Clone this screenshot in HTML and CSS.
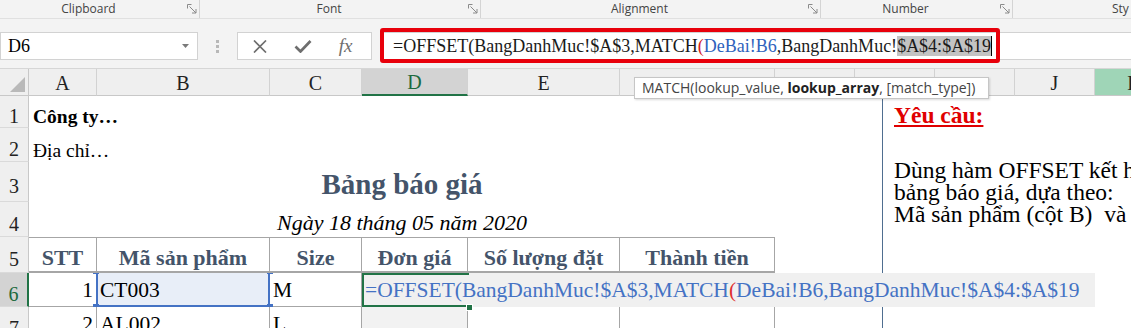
FILE: index.html
```html
<!DOCTYPE html>
<html lang="vi">
  <head>
    <meta charset="UTF-8" />
    <title>Bảng báo giá - Excel</title>
    <link rel="stylesheet" href="styles.css">
  </head>
  <body>
    <!-- Ribbon group labels -->
    <div class="ribbon">
      <div class="group g-clip">
        <span class="glabel">Clipboard</span>
        <span class="launch"><svg width="10" height="10" viewBox="0 0 10 10"><path d="M0.5 4.5V0.5H4.5M2.5 2.5L9 9M9 5V9H5" stroke="#8a8a8a" fill="none"/></svg></span>
      </div>
      <div class="group g-font">
        <span class="glabel">Font</span>
        <span class="launch"><svg width="10" height="10" viewBox="0 0 10 10"><path d="M0.5 4.5V0.5H4.5M2.5 2.5L9 9M9 5V9H5" stroke="#8a8a8a" fill="none"/></svg></span>
      </div>
      <div class="group g-align">
        <span class="glabel">Alignment</span>
        <span class="launch"><svg width="10" height="10" viewBox="0 0 10 10"><path d="M0.5 4.5V0.5H4.5M2.5 2.5L9 9M9 5V9H5" stroke="#8a8a8a" fill="none"/></svg></span>
      </div>
      <div class="group g-num">
        <span class="glabel">Number</span>
        <span class="launch"><svg width="10" height="10" viewBox="0 0 10 10"><path d="M0.5 4.5V0.5H4.5M2.5 2.5L9 9M9 5V9H5" stroke="#8a8a8a" fill="none"/></svg></span>
      </div>
      <div class="group g-sty">Sty</div>
    </div>

    <!-- Formula bar -->
    <div class="fbar">
      <div class="namebox">
        <span>D6</span>
        <svg width="7" height="4" viewBox="0 0 7 4"><path d="M0 0H7L3.5 4Z" fill="#7a7a7a"/></svg>
      </div>
      <div class="grip"><i></i><i></i><i></i></div>
      <div class="fxbtns">
        <span class="fbtn"><svg width="14" height="13" viewBox="0 0 14 13"><path d="M1 0.5L13 12.5M13 0.5L1 12.5" stroke="#6e6e6e" stroke-width="1.7" fill="none"/></svg></span>
        <span class="fbtn"><svg width="18" height="13" viewBox="0 0 18 13"><path d="M1.5 6.5L6.5 11.5L16.5 1" stroke="#6e6e6e" stroke-width="2.7" fill="none"/></svg></span>
        <span class="fbtn fx">fx</span>
      </div>
      <div class="finput">
        <span>=OFFSET(BangDanhMuc!$A$3,MATCH</span><span class="paren">(</span><span class="ref">DeBai!B6</span><span>,BangDanhMuc!</span><span class="hl">$A$4:$A$19</span><span class="caret"></span>
        <div class="annot"></div>
      </div>
    </div>

    <!-- Sheet -->
    <div class="sheet">
      <div class="row hdr">
        <div class="corner"><svg width="29" height="27" viewBox="0 0 29 27"><path d="M25 8V23H10Z" fill="#b9b9b9"/></svg></div>
        <div class="ch w-a">A</div>
        <div class="ch w-b">B</div>
        <div class="ch w-c">C</div>
        <div class="ch w-d on">D</div>
        <div class="ch w-e">E</div>
        <div class="ch w-f"></div>
        <div class="ch w-g"></div>
        <div class="ch w-g"></div>
        <div class="ch w-g"></div>
        <div class="ch w-g">J</div>
        <div class="ch w-g col-k">K</div>
      </div>

      <div class="row r1">
        <div class="rh">1</div>
        <div class="cell wide bold">Công ty…</div>
      </div>
      <div class="row r2">
        <div class="rh">2</div>
        <div class="cell wide">Địa chỉ…</div>
      </div>
      <div class="row r3">
        <div class="rh">3</div>
        <div class="cell w-af title">Bảng báo giá</div>
      </div>
      <div class="row r4">
        <div class="rh">4</div>
        <div class="cell w-af subtitle">Ngày 18 tháng 05 năm 2020</div>
      </div>
      <div class="row r5">
        <div class="rh">5</div>
        <div class="cell tb w-a">STT</div>
        <div class="cell tb w-b">Mã sản phẩm</div>
        <div class="cell tb w-c">Size</div>
        <div class="cell tb w-d">Đơn giá</div>
        <div class="cell tb w-e">Số lượng đặt</div>
        <div class="cell tb w-f">Thành tiền</div>
      </div>
      <div class="row r6">
        <div class="rh on">6</div>
        <div class="cell tb w-a num">1</div>
        <div class="cell tb w-b refsel">CT003<i class="hd tl"></i><i class="hd tr"></i><i class="hd bl"></i><i class="hd br"></i></div>
        <div class="cell tb w-c">M</div>
        <div class="cell tb w-d"></div>
        <div class="cell tb w-e"></div>
        <div class="cell tb w-f"></div>
      </div>
      <div class="row r7">
        <div class="rh">7</div>
        <div class="cell tb w-a num">2</div>
        <div class="cell tb w-b">AL002</div>
        <div class="cell tb w-c">L</div>
        <div class="cell tb w-d shade"></div>
        <div class="cell tb w-e"></div>
        <div class="cell tb w-f"></div>
      </div>
    </div>

    <!-- Text box shape on the sheet -->
    <div class="note">
      <div class="note-title">Yêu cầu:</div>
      <div class="note-body">
        <div>Dùng hàm OFFSET kết hợp</div>
        <div>bảng báo giá, dựa theo:</div>
        <div>Mã sản phẩm (cột B)&nbsp; và</div>
      </div>
    </div>

    <!-- In-cell editing of D6 -->
    <div class="edit">
      <div class="active"></div>
      <div class="fillh"></div>
      <span>=OFFSET(BangDanhMuc!$A$3,MATCH</span><span class="paren">(</span><span>DeBai!B6,BangDanhMuc!$A$4:$A$19</span>
    </div>

    <!-- Function argument tooltip -->
    <div class="tip">MATCH(lookup_value, <b>lookup_array</b>, [match_type])</div>
  </body>
</html>
```

FILE: styles.css
```css
* {
  box-sizing: border-box;
}

body {
  margin: 0;
  width: 1131px;
  height: 328px;
  overflow: hidden;
  position: relative;
  background: #fff;
  color: #000;
  font-family: "Liberation Serif", "Times New Roman", serif;
}

/* Ribbon group labels */
.ribbon {
  display: flex;
  height: 19px;
  background: #f3f3f3;
  border-bottom: 1px solid #e0e0e0;
  font-family: "Open Sans", "Noto Sans", sans-serif;
  font-size: 12px;
  line-height: 18px;
  color: #444;
  white-space: nowrap;
  overflow: hidden;
}

.group {
  display: flex;
  flex: none;
  border-right: 1px solid #d4d4d4;
}

.glabel {
  flex: 1;
  text-align: center;
}

.launch {
  width: 22px;
  display: flex;
  align-items: center;
  justify-content: flex-end;
  padding-right: 2px;
}

.g-clip { width: 200px; }
.g-font { width: 281px; }
.g-align { width: 340px; }
.g-num { width: 192px; }

.g-sty {
  flex: 1;
  border: none;
  padding-left: 99px;
}

/* Formula bar */
.fbar {
  display: flex;
  align-items: flex-start;
  height: 50px;
  padding-top: 13px;
  background: #f3f3f3;
  border-bottom: 1px solid #d6d6d6;
}

.namebox {
  width: 198px;
  height: 28px;
  flex: none;
  display: flex;
  align-items: center;
  justify-content: space-between;
  padding: 0 8px 0 7px;
  background: #fff;
  border: 1px solid #d2d2d2;
  font-size: 18px;
}

.grip {
  width: 39px;
  flex: none;
  display: flex;
  flex-direction: column;
  align-items: center;
  gap: 2px;
  padding-top: 8px;
}

.grip i {
  width: 3px;
  height: 3px;
  background: #b8b8b8;
}

.fxbtns {
  width: 135px;
  height: 28px;
  flex: none;
  display: flex;
  background: #fff;
  border: 1px solid #d2d2d2;
}

.fbtn {
  flex: 1;
  display: flex;
  align-items: center;
  justify-content: center;
}

.fx {
  font-style: italic;
  font-size: 19px;
  color: #6e6e6e;
  padding-right: 4px;
}

.finput {
  flex: 1;
  height: 28px;
  margin-left: 8px;
  position: relative;
  padding-left: 12px;
  background: #fff;
  border: 1px solid #d2d2d2;
  border-right: none;
  font-size: 18px;
  line-height: 26px;
  color: #1a1a1a;
  white-space: nowrap;
}

.finput .paren { color: #d42020; }
.finput .ref { color: #2f63bd; }
.finput .hl { background: #c3c3c3; }

.caret {
  display: inline-block;
  width: 1px;
  height: 20px;
  background: #000;
  vertical-align: -4px;
}

.annot {
  position: absolute;
  left: -1px;
  top: -5px;
  width: 620px;
  height: 35px;
  border: 4px solid #e8000b;
  border-radius: 3px;
}

/* Sheet grid */
.row {
  display: flex;
  overflow: hidden;
}

.hdr {
  height: 27px;
  background: #efefef;
}

.corner {
  width: 29px;
  flex: none;
  border-right: 1px solid #c8c8c8;
  border-bottom: 1px solid #c8c8c8;
}

.corner svg {
  display: block;
}

.ch {
  flex: none;
  display: flex;
  align-items: center;
  justify-content: center;
  padding-top: 2px;
  border-right: 1px solid #d2d2d2;
  border-bottom: 1px solid #c8c8c8;
  font-size: 20px;
  color: #222;
}

.ch.on {
  background: #d3d3d3;
  border-bottom: 2px solid #217346;
  color: #1c6a3e;
}

.col-k {
  background: #9fd5b7;
}

.w-a { width: 68px; }
.w-b { width: 173px; }
.w-c { width: 92px; }
.w-d { width: 106px; }
.w-e { width: 152px; }
.w-f { width: 155px; }
.w-g { width: 80px; }
.w-af { width: 746px; }

.r1 { height: 32px; }
.r2 { height: 34px; }
.r3 { height: 40px; }
.r4 { height: 35px; }
.r5 { height: 36px; }
.r6 { height: 34px; }
.r7 { height: 34px; }

.rh {
  width: 29px;
  flex: none;
  display: flex;
  align-items: center;
  justify-content: center;
  padding-top: 10px;
  background: #efefef;
  border-right: 1px solid #c8c8c8;
  border-bottom: 1px solid #dadada;
  font-size: 20px;
  color: #222;
}

.rh.on {
  background: #d3d3d3;
  border-right: 2px solid #217346;
  color: #1c6a3e;
}

.cell {
  flex: none;
  display: flex;
  align-items: flex-end;
  padding: 0 3px;
  white-space: nowrap;
}

.wide {
  flex: 1;
  padding-left: 4px;
  font-size: 19.5px;
}

.bold {
  font-weight: bold;
}

.title {
  justify-content: center;
  padding-bottom: 1px;
  font-size: 29px;
  font-weight: bold;
  color: #44546a;
}

.subtitle {
  justify-content: center;
  padding-bottom: 1px;
  font-size: 22px;
  font-style: italic;
}

.tb {
  border-right: 1px solid #a6a6a6;
}

.r5 .tb {
  justify-content: center;
  border-top: 1px solid #a6a6a6;
  border-bottom: 2px solid #a6a6a6;
  font-size: 22px;
  font-weight: bold;
  color: #44546a;
}

.r6 .tb,
.r7 .tb {
  border-bottom: 1px solid #a6a6a6;
  padding-bottom: 3px;
  font-size: 21.5px;
}

.num {
  justify-content: flex-end;
}

.shade {
  background: #f2f2f2;
}

/* B6 reference highlight */
.refsel {
  position: relative;
  background: #e8eef8;
}

.refsel::after {
  content: "";
  position: absolute;
  left: -1px;
  top: -2px;
  right: -1px;
  bottom: -1px;
  border: 2px solid #4472c4;
}

.hd {
  position: absolute;
  width: 6px;
  height: 6px;
  background: #4472c4;
  z-index: 1;
}

.tl { left: -4px; top: -5px; }
.tr { right: -4px; top: -5px; }
.bl { left: -4px; bottom: -4px; }
.br { right: -4px; bottom: -4px; }

/* Text box shape */
.note {
  position: absolute;
  left: 882px;
  top: 96px;
  width: 249px;
  height: 232px;
  padding: 6px 0 0 11px;
  border-left: 1px solid #4f6e90;
  font-size: 23.5px;
  white-space: nowrap;
  overflow: hidden;
}

.note-title {
  line-height: 26px;
  font-weight: bold;
  color: #e00000;
  text-decoration: underline;
}

.note-body {
  margin-top: 31px;
  line-height: 22px;
}

/* In-cell edit */
.edit {
  position: absolute;
  left: 362px;
  top: 273px;
  width: 733px;
  height: 34px;
  display: flex;
  align-items: flex-end;
  padding: 0 0 4px 3px;
  background: #f0f0f0;
  color: #4472c4;
  font-size: 21.5px;
  white-space: nowrap;
}

.edit .paren {
  color: #e03030;
}

.active {
  position: absolute;
  left: 0;
  top: 0;
  width: 107px;
  height: 34px;
  border: 2px solid #217346;
  border-right: none;
}

.fillh {
  position: absolute;
  left: 104px;
  top: 31px;
  width: 7px;
  height: 7px;
  background: #217346;
  border: 1px solid #fff;
}

/* Function tooltip */
.tip {
  position: absolute;
  left: 634px;
  top: 77px;
  width: 355px;
  height: 22px;
  padding-left: 7px;
  background: #fff;
  border: 1px solid #c6c6c6;
  box-shadow: 1px 1px 2px rgba(0, 0, 0, 0.15);
  font-family: "Open Sans", "Noto Sans", sans-serif;
  font-size: 14px;
  line-height: 20px;
  color: #444;
  white-space: nowrap;
}

.tip b {
  color: #222;
}
```
